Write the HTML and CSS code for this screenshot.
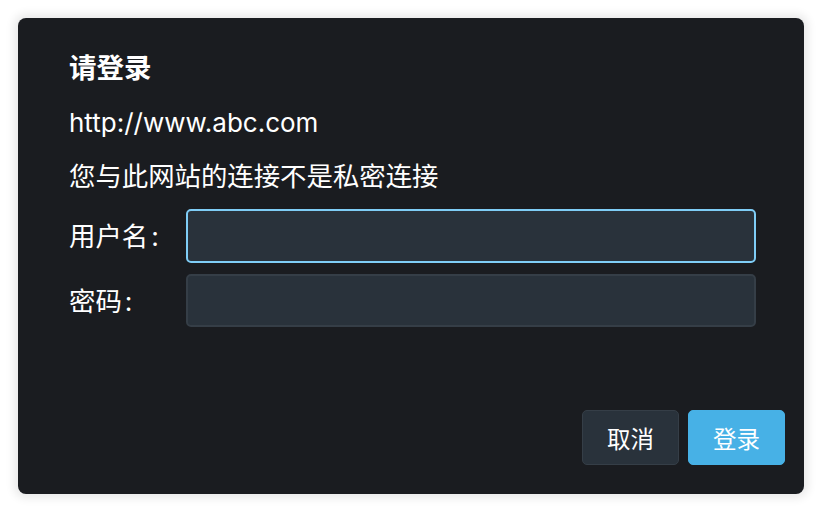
FILE: index.html
```html
<!DOCTYPE html>
<html lang="zh-CN">
<head>
<meta charset="utf-8">
<title>请登录</title>
<link rel="stylesheet" href="styles.css">
</head>
<body>
<div class="dialog">
  <div class="content">
    <div class="title">请登录</div>
    <div class="url">http://www.abc.com</div>
    <div class="note">您与此网站的连接不是私密连接</div>
    <div class="row row-user">
      <label class="label" for="u">用户名<span class="colon">:</span></label>
      <input class="field focused" id="u" type="text">
    </div>
    <div class="row row-pass">
      <label class="label" for="p">密码<span class="colon">:</span></label>
      <input class="field" id="p" type="password">
    </div>
  </div>
  <div class="footer">
    <button class="btn btn-cancel">取消</button>
    <button class="btn btn-login">登录</button>
  </div>
</div>
</body>
</html>
```

FILE: styles.css
```css
html, body {
  margin: 0;
  padding: 0;
  background: #ffffff;
}
body {
  padding: 18px;
  font-family: Inter, "Noto Sans CJK SC", sans-serif;
  color: #ffffff;
}
.dialog {
  width: 786px;
  height: 476px;
  box-sizing: border-box;
  background: #1a1c20;
  border-radius: 8px;
  box-shadow: 0 0 10px 4px rgba(0, 0, 0, 0.09);
  display: flex;
  flex-direction: column;
}
.content {
  padding: 32px 48px 0 51px;
  display: flex;
  flex-direction: column;
}
.title {
  font-size: 27.5px;
  line-height: 36px;
  font-weight: 700;
}
.url {
  margin-top: 19px;
  font-size: 26px;
  line-height: 36px;
}
.note {
  margin-top: 17px;
  font-size: 26.4px;
  line-height: 36px;
}
.row {
  display: flex;
  align-items: center;
}
.row-user { margin-top: 15px; }
.row-pass { margin-top: 11px; }
.label {
  width: 117px;
  flex: none;
  font-size: 26.4px;
  line-height: 36px;
}
.colon {
  margin-left: 3px;
}
.field {
  flex: 1;
  box-sizing: border-box;
  height: 54px;
  margin: 0;
  background: #29323b;
  border: 2px solid #353e47;
  border-radius: 5px;
  outline: none;
  color: #fff;
  font-size: 22px;
  padding: 0 12px;
}
.row-pass .field { height: 53px; }
.field.focused {
  border-color: #7fcdf6;
}
.footer {
  margin-top: auto;
  padding: 0 19px 29px 0;
  display: flex;
  justify-content: flex-end;
  gap: 9px;
}
.btn {
  width: 97px;
  height: 55px;
  box-sizing: border-box;
  border-radius: 5px;
  font-family: "Noto Sans CJK SC", sans-serif;
  font-size: 23.5px;
  color: #ffffff;
  padding: 0;
  cursor: pointer;
}
.btn-cancel {
  background: #29323b;
  border: 1px solid #353e47;
}
.btn-login {
  background: #47b1e6;
  border: 1px solid #47b1e6;
}
```
